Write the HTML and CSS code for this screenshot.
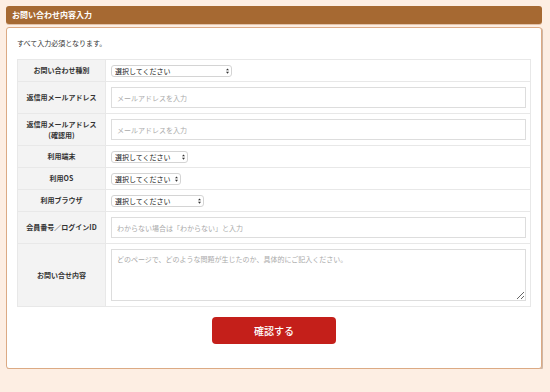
FILE: index.html
```html
<!DOCTYPE html>
<html lang="ja">
<head>
<meta charset="UTF-8">
<meta name="viewport" content="width=device-width,initial-scale=1">
<title>お問い合わせ</title>
<link rel="stylesheet" href="styles.css">
</head>
<body>

<h1 class="bar">お問い合わせ内容入力</h1>

<div class="card">
  <p class="note">すべて入力必須となります。</p>

  <table class="form">
    <tr class="r-sel">
      <th>お問い合わせ種別</th>
      <td><span class="sel w1"><select><option>選択してください</option></select><svg viewBox="0 0 4 7"><path d="M2 0L4 2.6H0zM2 7L0 4.4H4z"/></svg></span></td>
    </tr>
    <tr>
      <th>返信用メールアドレス</th>
      <td><input type="text" placeholder="メールアドレスを入力"></td>
    </tr>
    <tr>
      <th>返信用メールアドレス<br>(確認用)</th>
      <td><input type="text" placeholder="メールアドレスを入力"></td>
    </tr>
    <tr class="r-sel">
      <th>利用端末</th>
      <td><span class="sel w4"><select><option>選択してください</option></select><svg viewBox="0 0 4 7"><path d="M2 0L4 2.6H0zM2 7L0 4.4H4z"/></svg></span></td>
    </tr>
    <tr class="r-sel">
      <th>利用OS</th>
      <td><span class="sel w5"><select><option>選択してください</option></select><svg viewBox="0 0 4 7"><path d="M2 0L4 2.6H0zM2 7L0 4.4H4z"/></svg></span></td>
    </tr>
    <tr class="r-sel">
      <th>利用ブラウザ</th>
      <td><span class="sel w6"><select><option>選択してください</option></select><svg viewBox="0 0 4 7"><path d="M2 0L4 2.6H0zM2 7L0 4.4H4z"/></svg></span></td>
    </tr>
    <tr>
      <th>会員番号／ログインID</th>
      <td><input type="text" placeholder="わからない場合は「わからない」と入力"></td>
    </tr>
    <tr>
      <th>お問い合せ内容</th>
      <td><textarea placeholder="どのページで、どのような問題が生じたのか、具体的にご記入ください。"></textarea></td>
    </tr>
  </table>

  <div class="actions">
    <button type="button">確認する</button>
  </div>
</div>

</body>
</html>
```

FILE: styles.css
```css
:root{
  --bg:      #fdeee3;
  --brown:   #a66932;
  --red:     #c41f1a;
  --line:    #e8e8e8;
  --label:   #f3f3f3;
}
*{box-sizing:border-box;margin:0;padding:0}
body{
  font-family:"Noto Sans CJK JP","Noto Sans",sans-serif;
  background:var(--bg);
  color:#333;
  padding:6px 8px 0 6px;
}

/* ---------- Cabecera ---------- */
.bar{
  height:18px;
  background:var(--brown);
  color:#fff;
  font-size:8px;
  font-weight:700;
  line-height:18px;
  padding-left:6px;
  border-radius:3px;
  box-shadow:0 1px 0 #e3c2a8;
}

/* ---------- Tarjeta ---------- */
.card{
  margin-top:3px;
  background:#fff;
  border:1px solid #dcaa84;
  border-radius:3px;
  box-shadow:1px 1px 0 #cfb7a6;
  padding:9px 10px 24px 10px;
}
.note{
  font-size:7px;
  line-height:12px;
  margin-bottom:10px;
}

/* ---------- Tabla ---------- */
table.form{
  width:100%;
  border-collapse:collapse;
  border:1px solid var(--line);
}
.form th,.form td{
  border:1px solid var(--line);
  font-size:7px;
}
.form th{
  width:88px;
  background:var(--label);
  font-weight:700;
  text-align:center;
  line-height:11px;
  color:#333;
}
.form td{padding:5px 4px 5px 5px}
.form tr.r-sel td{height:22px;padding:0 5px}

input[type=text]{
  display:block;
  width:100%;
  height:21px;
  border:1px solid #ddd;
  padding:0 5px;
  font:inherit;
  font-size:7px;
  outline:none;
}
textarea{
  display:block;
  width:100%;
  height:52px;
  border:1px solid #ddd;
  padding:4px 5px;
  font:inherit;
  font-size:7px;
  resize:vertical;
  outline:none;
}
::placeholder{color:#aaa}

/* select estilo mac */
.sel{
  position:relative;
  display:block;
  height:12px;
}
.sel select{
  appearance:none;
  -webkit-appearance:none;
  width:100%;
  height:12px;
  border:1px solid #d4d4d4;
  border-radius:3px;
  background:#fff;
  font:inherit;
  font-size:7px;
  color:#222;
  padding:0 0 0 3px;
  line-height:10px;
}
.sel svg{
  position:absolute;
  right:3px;top:3px;
  width:3px;height:6px;
  fill:#333;
}
.w1{width:121px}
.w4{width:77px}
.w5{width:70px}
.w6{width:93px}

/* ---------- Botón ---------- */
.actions{
  display:flex;
  justify-content:center;
  padding-top:10px;
}
button{
  width:124px;
  height:27px;
  background:var(--red);
  color:#fff;
  border:none;
  border-radius:4px;
  font:inherit;
  font-size:10px;
  font-weight:500;
  cursor:pointer;
}
```
